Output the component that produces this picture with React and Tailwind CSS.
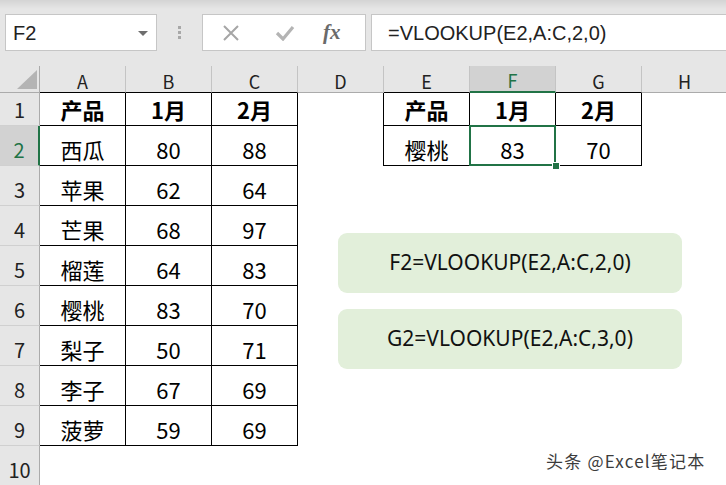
import React from "react";

const COLS = ["A", "B", "C", "D", "E", "F", "G", "H"];

const LEFT = [
  ["产品", "1月", "2月"],
  ["西瓜", "80", "88"],
  ["苹果", "62", "64"],
  ["芒果", "68", "97"],
  ["榴莲", "64", "83"],
  ["樱桃", "83", "70"],
  ["梨子", "50", "71"],
  ["李子", "67", "69"],
  ["菠萝", "59", "69"],
];

const RIGHT = [
  ["产品", "1月", "2月"],
  ["樱桃", "83", "70"],
];

const cellFont = { fontFamily: '"Noto Sans CJK SC", "Noto Sans", sans-serif' };

function cellText(r, c) {
  if (r >= 1 && r <= 9 && c <= 2) return LEFT[r - 1][c];
  if (r >= 1 && r <= 2 && c >= 4 && c <= 6) return RIGHT[r - 1][c - 4];
  return "";
}

function Cell({ r, c }) {
  const inLeft = r >= 1 && r <= 9 && c <= 2;
  const inRight = r >= 1 && r <= 2 && c >= 4 && c <= 6;
  const inTable = inLeft || inRight;
  const blackRight = inTable || (c === 3 && r <= 2);
  const selected = r === 2 && c === 5;

  return (
    <div
      className={
        "relative flex items-end justify-center pb-[5px] text-[22px] leading-none text-black bg-white " +
        (inTable ? "border-b border-black " : "") +
        (blackRight ? "border-r border-black " : "") +
        (r === 1 ? "font-bold" : "")
      }
      style={cellFont}
    >
      {cellText(r, c)}
      {selected && (
        <>
          <div className="absolute inset-[-1px] border-2 border-[#217346] z-10" />
          <div className="absolute right-[-5px] bottom-[-5px] w-[8px] h-[8px] bg-[#217346] border border-white z-20" />
        </>
      )}
    </div>
  );
}

function ColHeader({ c }) {
  const sel = c === 5;
  const black = [0, 1, 2, 4, 6].includes(c);
  return (
    <div
      className={
        "flex items-end justify-center pb-[2px] text-[18px] leading-none border-r border-[#c4c4c4] " +
        (sel
          ? "bg-[#d2d2d2] text-[#217346] border-b-2 border-b-[#217346]"
          : black
          ? "bg-[#e6e6e6] text-[#222] border-b border-b-black"
          : "bg-[#e6e6e6] text-[#222] border-b border-b-[#ababab]")
      }
      style={cellFont}
    >
      {COLS[c]}
    </div>
  );
}

function RowHeader({ r }) {
  const sel = r === 2;
  return (
    <div
      className={
        "flex items-end justify-center pb-[5px] text-[20px] leading-none border-b border-[#d0d0d0] " +
        (sel
          ? "bg-[#d2d2d2] text-[#217346] border-r-2 border-r-[#217346]"
          : "bg-[#e6e6e6] text-[#222] border-r border-r-[#ababab]")
      }
      style={cellFont}
    >
      {r}
    </div>
  );
}

function Toolbar() {
  return (
    <div className="flex items-start h-[66px] pt-[14px] pl-[5px] bg-[linear-gradient(to_bottom,#d4d4d4,#e6e6e6_9px)]">
      <div className="relative flex items-center w-[152px] h-[37px] bg-white border border-[#c6c6c6] pl-[7px]">
        <span className="text-[20px] text-[#222]" style={{ fontFamily: '"Liberation Sans", sans-serif' }}>
          F2
        </span>
        <div className="absolute right-[8px] top-[16px] w-0 h-0 border-l-[5px] border-r-[5px] border-t-[5px] border-l-transparent border-r-transparent border-t-[#6e6e6e]" />
      </div>
      <div className="flex flex-col items-center justify-center gap-[2px] w-[45px] h-[37px]">
        <div className="w-[3px] h-[3px] bg-[#a8a8a8]" />
        <div className="w-[3px] h-[3px] bg-[#a8a8a8]" />
        <div className="w-[3px] h-[3px] bg-[#a8a8a8]" />
      </div>
      <div className="flex items-center w-[164px] h-[37px] bg-white border border-[#c6c6c6]">
        <svg width="18" height="18" viewBox="0 0 18 18" className="ml-[19px]">
          <path d="M2 2 L16 16 M16 2 L2 16" stroke="#a6a6a6" strokeWidth="2" fill="none" />
        </svg>
        <svg width="20" height="16" viewBox="0 0 20 16" className="ml-[35px]">
          <path d="M2 8 L8 14 L18 2" stroke="#b4b4b4" strokeWidth="3.2" fill="none" />
        </svg>
        <span
          className="ml-[28px] text-[21px] italic font-bold text-[#6a6a6a]"
          style={{ fontFamily: '"Liberation Serif", serif' }}
        >
          fx
        </span>
      </div>
      <div className="flex items-center flex-1 ml-[5px] h-[37px] bg-white border border-[#c6c6c6] border-r-0 pl-[16px]">
        <span className="text-[20px] text-[#222]" style={{ fontFamily: '"Liberation Sans", sans-serif' }}>
          =VLOOKUP(E2,A:C,2,0)
        </span>
      </div>
    </div>
  );
}

export default function App() {
  const rows = [];
  for (let r = 0; r <= 10; r++) {
    if (r === 0) {
      rows.push(
        <div key="corner" className="relative bg-[#e6e6e6] border-r border-b border-[#ababab]">
          <svg className="absolute left-[17px] top-[4px]" width="20" height="19" viewBox="0 0 20 19">
            <polygon points="20,0 20,19 0,19" fill="#b4b4b4" />
          </svg>
        </div>
      );
      COLS.forEach((_, c) => rows.push(<ColHeader key={"h" + c} c={c} />));
    } else {
      rows.push(<RowHeader key={"r" + r} r={r} />);
      COLS.forEach((_, c) => rows.push(<Cell key={r + "-" + c} r={r} c={c} />));
    }
  }

  return (
    <div className="relative w-[726px] h-[485px] overflow-hidden bg-white">
      <Toolbar />
      <div className="grid grid-cols-[40px_repeat(8,86px)] grid-rows-[27px_33px_repeat(8,40px)_40px]">
        {rows}
      </div>

      <div
        className="absolute left-[338px] top-[233px] w-[344px] h-[60px] rounded-[9px] bg-[#e2efda] flex items-center justify-center text-[21px] text-[#111]"
        style={{ fontFamily: '"Noto Sans", sans-serif' }}
      >
        F2=VLOOKUP(E2,A:C,2,0)
      </div>
      <div
        className="absolute left-[338px] top-[309px] w-[344px] h-[60px] rounded-[9px] bg-[#e2efda] flex items-center justify-center text-[21px] text-[#111]"
        style={{ fontFamily: '"Noto Sans", sans-serif' }}
      >
        G2=VLOOKUP(E2,A:C,3,0)
      </div>

      <div
        className="absolute left-[546px] top-[448px] text-[17px] tracking-[1.2px] text-[#3c3c3c] [text-shadow:0_0_2px_#fff,0_0_2px_#fff]"
        style={{ fontFamily: '"Noto Sans CJK SC", sans-serif' }}
      >
        头条 @Excel笔记本
      </div>
    </div>
  );
}
